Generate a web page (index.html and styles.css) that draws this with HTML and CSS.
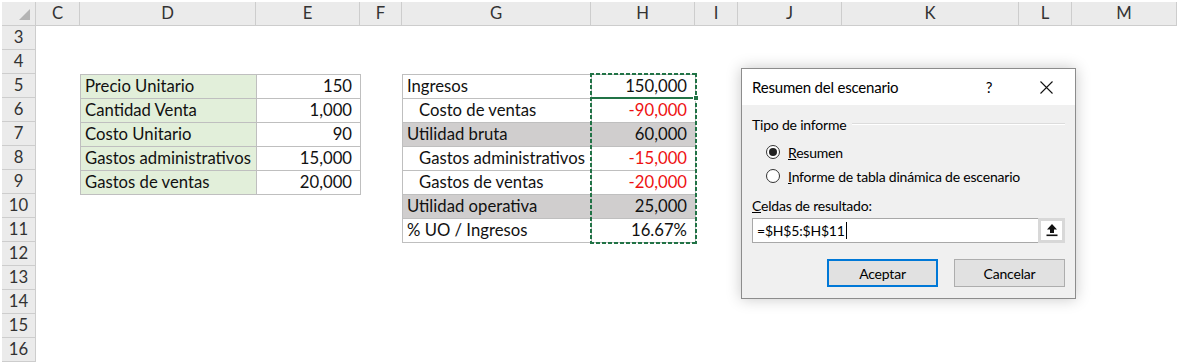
FILE: index.html
```html
<!DOCTYPE html>
<html lang="es">
<head>
    <meta charset="UTF-8">
    <meta name="viewport" content="width=device-width, initial-scale=1.0">
    <title>Resumen del escenario</title>
    <link rel="stylesheet" href="styles.css">
</head>
<body>

<div class="sheet">
    <div class="corner"><span class="corner-mark"></span></div>
    <div class="col-head">C</div>
    <div class="col-head">D</div>
    <div class="col-head">E</div>
    <div class="col-head">F</div>
    <div class="col-head">G</div>
    <div class="col-head">H</div>
    <div class="col-head">I</div>
    <div class="col-head">J</div>
    <div class="col-head">K</div>
    <div class="col-head">L</div>
    <div class="col-head">M</div>

    <div class="row-head">3</div>
    <div class="row-head">4</div>
    <div class="row-head">5</div>
    <div class="row-head">6</div>
    <div class="row-head">7</div>
    <div class="row-head">8</div>
    <div class="row-head">9</div>
    <div class="row-head">10</div>
    <div class="row-head">11</div>
    <div class="row-head">12</div>
    <div class="row-head">13</div>
    <div class="row-head">14</div>
    <div class="row-head">15</div>
    <div class="row-head">16</div>

    <!-- datos de entrada -->
    <div class="inputs">
        <div class="cell label">Precio Unitario</div>
        <div class="cell num">150</div>
        <div class="cell label">Cantidad Venta</div>
        <div class="cell num">1,000</div>
        <div class="cell label">Costo Unitario</div>
        <div class="cell num">90</div>
        <div class="cell label">Gastos administrativos</div>
        <div class="cell num">15,000</div>
        <div class="cell label">Gastos de ventas</div>
        <div class="cell num">20,000</div>
    </div>

    <!-- estado de resultados -->
    <div class="results">
        <div class="cell">Ingresos</div>
        <div class="cell num">150,000</div>
        <div class="cell indent">Costo de ventas</div>
        <div class="cell num neg">-90,000</div>
        <div class="cell total">Utilidad bruta</div>
        <div class="cell num total">60,000</div>
        <div class="cell indent">Gastos administrativos</div>
        <div class="cell num neg">-15,000</div>
        <div class="cell indent">Gastos de ventas</div>
        <div class="cell num neg">-20,000</div>
        <div class="cell total">Utilidad operativa</div>
        <div class="cell num total">25,000</div>
        <div class="cell">% UO / Ingresos</div>
        <div class="cell num">16.67%</div>

        <div class="marquee"></div>
        <div class="active-edge"></div>
        <div class="fill-handle"></div>
    </div>
</div>

<div class="dialog">
    <div class="dialog-title">
        <span class="title-text">Resumen del escenario</span>
        <span class="title-btn">?</span>
        <span class="title-btn">
            <svg width="13" height="13" viewBox="0 0 13 13">
                <path d="M0.5 0.5 L12.5 12.5 M12.5 0.5 L0.5 12.5" stroke="#111" stroke-width="1.1" fill="none"/>
            </svg>
        </span>
    </div>

    <div class="dialog-body">
        <div class="group-label">
            <span>Tipo de informe</span>
            <span class="group-line"></span>
        </div>

        <div class="radio">
            <span class="radio-circle checked"></span>
            <span><u>R</u>esumen</span>
        </div>
        <div class="radio">
            <span class="radio-circle"></span>
            <span><u>I</u>nforme de tabla dinámica de escenario</span>
        </div>

        <div class="field-label"><u>C</u>eldas de resultado:</div>
        <div class="ref-box">
            <span class="ref-text">=$H$5:$H$11</span>
            <span class="caret"></span>
            <span class="ref-btn">
                <svg width="14" height="14" viewBox="0 0 14 14">
                    <path d="M7 1 L12 6.5 L9 6.5 L9 10 L5 10 L5 6.5 L2 6.5 Z" fill="#111"/>
                    <rect x="1.5" y="11.5" width="11" height="1.6" fill="#111"/>
                </svg>
            </span>
        </div>

        <div class="buttons">
            <button class="btn default">Aceptar</button>
            <button class="btn">Cancelar</button>
        </div>
    </div>
</div>

</body>
</html>
```

FILE: styles.css
```css
* {
    box-sizing: border-box;
}

body {
    margin: 0;
    background-color: #fff;
    font-family: 'Lato', 'Liberation Sans', sans-serif;
    color: #222;
    overflow: hidden;
}

/* hoja de calculo */
.sheet {
    display: grid;
    grid-template-columns: 34px 44px 176px 104px 42px 189px 104px 43px 104px 177px 53px 1fr;
    grid-template-rows: repeat(15, 24px);
    margin: 2px 0 0 2px;
    font-size: 16.7px;
}

.corner,
.col-head,
.row-head {
    background-color: #ebebeb;
    border-right: 1px solid #cdcdcd;
    border-bottom: 1px solid #cdcdcd;
    color: #333;
    text-align: center;
    line-height: 23px;
}

.corner {
    display: flex;
    justify-content: flex-end;
    align-items: flex-end;
    padding: 0 5px 5px 0;
}

.corner-mark {
    width: 0;
    height: 0;
    border-left: 11px solid transparent;
    border-bottom: 11px solid #b4b4b4;
}

.row-head {
    grid-column: 1;
}

.inputs,
.results {
    display: grid;
    grid-auto-rows: 23px;
    gap: 1px;
    padding: 1px;
    background-color: #bfbfbf;
    align-self: start;
    justify-self: start;
}

.inputs {
    grid-column: 3 / 5;
    grid-row: 4 / 9;
    width: 281px;
    height: 121px;
    grid-template-columns: 175px 103px;
}

.results {
    position: relative;
    grid-column: 6 / 8;
    grid-row: 4 / 11;
    width: 294px;
    height: 169px;
    grid-template-columns: 188px 103px;
}

.cell {
    background-color: #fff;
    padding: 0 8px 0 4px;
    line-height: 23px;
    white-space: nowrap;
    color: #111;
}

.cell.label {
    background-color: #e2efda;
}

.cell.num {
    text-align: right;
}

.cell.indent {
    padding-left: 16px;
}

.cell.total {
    background-color: #d0cece;
}

.cell.neg {
    color: #ee1111;
}

/* borde de copia (hormigas) */
.marquee {
    position: absolute;
    left: 188px;
    top: -1px;
    width: 107px;
    height: 171px;
    background:
        repeating-linear-gradient(90deg, #217346 0 4px, transparent 4px 6px) top left / 100% 2px no-repeat,
        repeating-linear-gradient(90deg, #217346 0 4px, transparent 4px 6px) bottom left / 100% 2px no-repeat,
        repeating-linear-gradient(180deg, #217346 0 4px, transparent 4px 6px) top left / 2px 100% no-repeat,
        repeating-linear-gradient(180deg, #217346 0 4px, transparent 4px 6px) top right / 2px 100% no-repeat;
}

.active-edge {
    position: absolute;
    left: 189px;
    top: 23px;
    width: 105px;
    height: 2px;
    background-color: #217346;
}

.fill-handle {
    position: absolute;
    left: 291px;
    top: 21px;
    width: 6px;
    height: 6px;
    background-color: #217346;
    border: 1px solid #fff;
}

/* dialogo */
.dialog {
    position: absolute;
    left: 741px;
    top: 68px;
    width: 335px;
    height: 231px;
    border: 1px solid #8c8c8c;
    background-color: #f0f0f0;
    box-shadow: 0 0 14px rgba(0, 0, 0, 0.22);
    font-size: 14px;
    letter-spacing: -0.2px;
    color: #000;
}

.dialog-title {
    display: flex;
    align-items: center;
    height: 36px;
    padding: 0 6px 0 10px;
    background-color: #fff;
    font-size: 15px;
}

.title-text {
    flex: 1;
}

.title-btn {
    display: flex;
    justify-content: center;
    width: 46px;
}

.title-btn + .title-btn {
    margin-left: 11px;
}

.dialog-body {
    padding: 0 10px 10px 10px;
}

.group-label {
    display: flex;
    align-items: center;
    gap: 6px;
    height: 18px;
    margin-top: 10px;
}

.group-line {
    flex: 1;
    height: 2px;
    border-top: 1px solid #dcdcdc;
    border-bottom: 1px solid #fff;
}

.group-label + .radio {
    margin-top: 7px;
}

.radio {
    display: flex;
    align-items: center;
    gap: 8px;
    height: 24px;
    padding-left: 14px;
}

.radio-circle {
    display: flex;
    justify-content: center;
    align-items: center;
    width: 14px;
    height: 14px;
    border: 1px solid #333;
    border-radius: 50%;
    background-color: #fff;
}

.radio-circle.checked::after {
    content: "";
    width: 8px;
    height: 8px;
    border-radius: 50%;
    background-color: #222;
}

.field-label {
    height: 18px;
    line-height: 18px;
    margin-top: 9px;
}

.ref-box {
    display: flex;
    align-items: center;
    height: 25px;
    margin-top: 3px;
    border: 1px solid #a8a8a8;
    background-color: #fff;
    padding-left: 4px;
}

.ref-text {
    line-height: 23px;
}

.caret {
    width: 1px;
    height: 17px;
    margin-left: 1px;
    background-color: #000;
}

.ref-btn {
    display: flex;
    justify-content: center;
    align-items: center;
    width: 27px;
    height: 25px;
    margin: -1px -1px 0 auto;
    border: 3px solid #d8d8d8;
    background-color: #fff;
}

.buttons {
    display: flex;
    justify-content: flex-end;
    gap: 16px;
    margin-top: 16px;
}

.btn {
    width: 111px;
    height: 28px;
    border: 1px solid #adadad;
    background-color: #e1e1e1;
    font-family: inherit;
    font-size: 14px;
    letter-spacing: -0.2px;
    color: #000;
    padding: 0;
}

.btn.default {
    border: 2px solid #0078d7;
}
```
